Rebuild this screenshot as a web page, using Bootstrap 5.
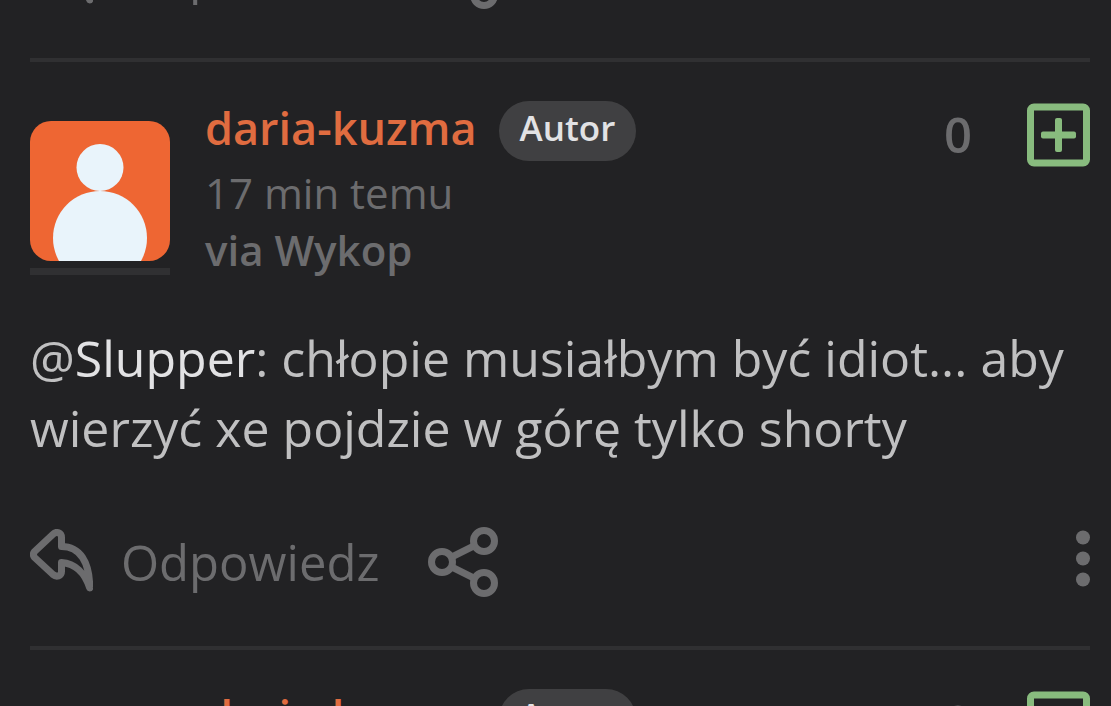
<!DOCTYPE html>
<html lang="pl" data-bs-theme="dark">
<head>
<meta charset="utf-8">
<meta name="viewport" content="width=device-width, initial-scale=1">
<title>Komentarze</title>
<link href="https://cdn.jsdelivr.net/npm/bootstrap@5.3.0/dist/css/bootstrap.min.css" rel="stylesheet">
<style>
  body { background: #222224; color: #c0c0c1; font-family: "Open Sans", "Noto Sans", sans-serif; font-size: 49px; line-height: 70px; }
  svg { display: block; flex: none; }
  .thread { padding: 0 21px 0 30px; }
  .entry { border-bottom: 4px solid #303032; padding: 39px 0 49px; }
  .entry-tail { padding-top: 0; }
  .tail-clip { height: 9px; }
  .avatar-col { width: 140px; margin-top: 20px; }
  .avatar-box { height: 140px; border-radius: 21px; background: #ee6633; }
  .rank-bar { height: 7px; margin-top: 7px; background: #303032; }
  .meta { margin-left: 35px; font-size: 42px; line-height: 57px; color: #6c6c6e; }
  .name-row { gap: 22px; margin-bottom: 3px; }
  .user-name { color: #e06c40; font-size: 45px; font-weight: 600; line-height: 53px; }
  .author-pill { background: #404042; color: #e2e2e4; font-size: 35px; font-weight: 600; line-height: 53px; padding: 0 21px 7px; }
  .via { font-weight: 600; }
  .votes { gap: 55px; line-height: 66px; color: #6c6c6e; font-weight: 600; }
  .plus-btn { margin-top: 2px; }
  .message { font-size: 50px; margin: 45px 0 64px; }
  .mention { color: #e2e2e4; }
  .actions { height: 70px; line-height: 68px; color: #6c6c6e; }
  .plain-btn { background: none; border: 0; padding: 0; color: inherit; }
  .reply-btn { gap: 28px; margin-right: 49px; }
</style>
</head>
<body class="vh-100 overflow-hidden">
<svg width="0" height="0" class="position-absolute" aria-hidden="true">
  <symbol id="i-reply" viewBox="0 0 63 66">
    <path d="M4.600 22.500 L23 5.200 C26.500 1.700 31.500 4 31.500 8.500 V17.500 C50 17.500 59.700 33 59.700 59 C55 44 45 34.500 31.500 33.500 V42.500 C31.500 47 26.500 48.500 23 45.500 L4.600 28.500 Q2.200 25.500 4.600 22.500 Z" fill="none" stroke="currentColor" stroke-width="7" stroke-linejoin="round"/>
  </symbol>
  <symbol id="i-share" viewBox="0 0 70 70">
    <g fill="none" stroke="currentColor" stroke-width="7">
      <circle cx="14" cy="35" r="10.500"/><circle cx="56" cy="14" r="10.500"/><circle cx="56" cy="56" r="10.500"/>
      <path d="M23.500 30.200 46.500 18.700M23.500 39.800 46.500 51.300"/>
    </g>
  </symbol>
  <symbol id="i-more" viewBox="0 0 14 63">
    <g fill="currentColor"><circle cx="7" cy="10.500" r="7"/><circle cx="7" cy="31.500" r="7"/><circle cx="7" cy="52.500" r="7"/></g>
  </symbol>
  <symbol id="i-plus" viewBox="0 0 63 63">
    <rect x="3.500" y="3.500" width="56" height="56" rx="3.500" fill="none" stroke="#88bb7e" stroke-width="7"/>
    <rect x="14" y="28" width="35" height="7" rx="2" fill="#88bb7e"/><rect x="28" y="14.500" width="7" height="34" rx="2" fill="#88bb7e"/>
  </symbol>
  <symbol id="i-person" viewBox="0 0 140 140">
    <circle cx="70" cy="46.500" r="23.500" fill="#e9f4fb"/><circle cx="70" cy="117" r="47" fill="#e9f4fb"/>
  </symbol>
</svg>

<main class="thread h-100 overflow-hidden">
  <article class="entry entry-tail">
    <div class="tail-clip d-flex align-items-end overflow-hidden">
      <footer class="actions d-flex align-items-center flex-fill">
        <button type="button" class="plain-btn reply-btn d-flex align-items-center"><svg width="63" height="66"><use href="#i-reply"/></svg>Odpowiedz</button>
        <button type="button" class="plain-btn" aria-label="Udostępnij"><svg width="70" height="70"><use href="#i-share"/></svg></button>
      </footer>
    </div>
  </article>

  <article class="entry">
    <header class="d-flex align-items-start">
      <div class="avatar-col flex-shrink-0">
        <div class="avatar-box overflow-hidden"><svg width="140" height="140"><use href="#i-person"/></svg></div>
        <div class="rank-bar"></div>
      </div>
      <div class="meta">
        <div class="name-row d-flex align-items-start">
          <a href="#" class="user-name text-decoration-none">daria-kuzma</a>
          <span class="author-pill rounded-pill">Autor</span>
        </div>
        <div>17 min temu</div>
        <div class="via">via Wykop</div>
      </div>
      <div class="votes d-flex align-items-start ms-auto">
        <span>0</span>
        <button type="button" class="plain-btn plus-btn" aria-label="Plusuj"><svg width="63" height="64"><use href="#i-plus"/></svg></button>
      </div>
    </header>
    <p class="message">@<a href="#" class="mention text-decoration-none">Slupper</a>: chłopie musiałbym być idiot... aby wierzyć xe pojdzie w górę tylko shorty</p>
    <footer class="actions d-flex align-items-center">
      <button type="button" class="plain-btn reply-btn d-flex align-items-center"><svg width="63" height="66"><use href="#i-reply"/></svg>Odpowiedz</button>
      <button type="button" class="plain-btn" aria-label="Udostępnij"><svg width="70" height="70"><use href="#i-share"/></svg></button>
      <button type="button" class="plain-btn ms-auto align-self-start" aria-label="Więcej"><svg width="14" height="63"><use href="#i-more"/></svg></button>
    </footer>
  </article>

  <article class="entry">
    <header class="d-flex align-items-start">
      <div class="avatar-col flex-shrink-0">
        <div class="avatar-box overflow-hidden"><svg width="140" height="140"><use href="#i-person"/></svg></div>
      </div>
      <div class="meta">
        <div class="name-row d-flex align-items-start">
          <a href="#" class="user-name text-decoration-none">daria-kuzma</a>
          <span class="author-pill rounded-pill">Autor</span>
        </div>
      </div>
      <div class="votes d-flex align-items-start ms-auto">
        <span>0</span>
        <button type="button" class="plain-btn plus-btn" aria-label="Plusuj"><svg width="63" height="64"><use href="#i-plus"/></svg></button>
      </div>
    </header>
  </article>
</main>
<script src="https://cdn.jsdelivr.net/npm/bootstrap@5.3.0/dist/js/bootstrap.bundle.min.js"></script>
</body>
</html>
